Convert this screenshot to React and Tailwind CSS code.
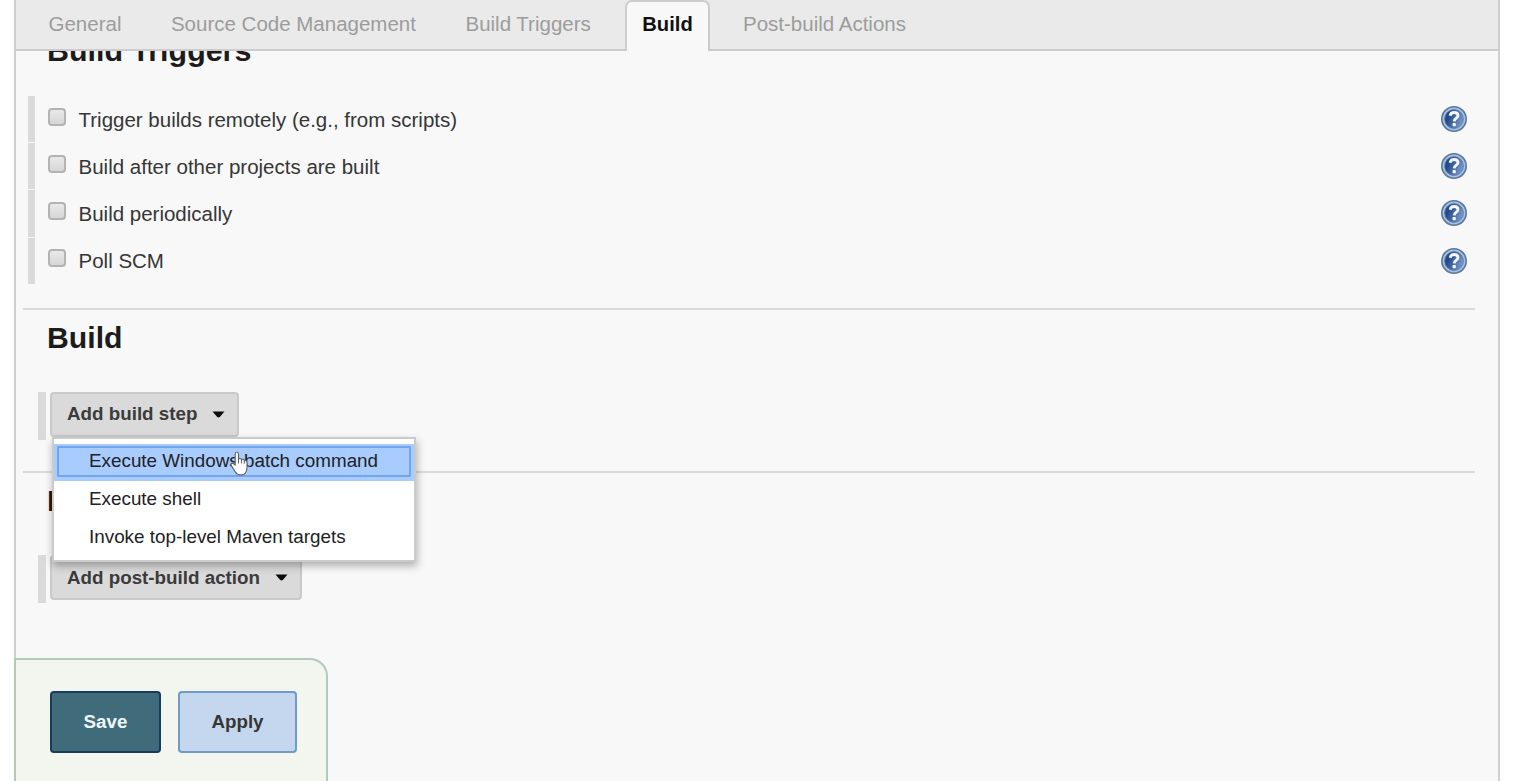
const triggers = [
  'Trigger builds remotely (e.g., from scripts)',
  'Build after other projects are built',
  'Build periodically',
  'Poll SCM',
];

function HelpIcon() {
  return (
    <svg width="28" height="28" viewBox="0 0 28 28" aria-hidden="true">
      <defs>
        <linearGradient id="help" x1="0" y1="0.3" x2="1" y2="0.7">
          <stop offset="0.2" stopColor="#244a8a" />
          <stop offset="1" stopColor="#7f9fd0" />
        </linearGradient>
      </defs>
      <circle cx="14" cy="14" r="12.2" fill="#a9c0e0" stroke="#57799c" strokeWidth="1.6" />
      <circle cx="14" cy="14" r="9.4" fill="url(#help)" stroke="#5578ae" strokeWidth="0.8" />
      <path
        d="M10.1 10.8 C10.5 8.3 12.2 7.5 14.1 7.5 C16.6 7.5 18 8.9 18 10.7 C18 13.2 14.4 13.2 14.2 16.4"
        fill="none"
        stroke="#f4f7fc"
        strokeWidth="2.8"
      />
      <rect x="12.6" y="18" width="3.2" height="3.2" rx="0.8" fill="#f4f7fc" />
    </svg>
  );
}

function Caret() {
  return (
    <svg width="13" height="7" viewBox="0 0 13 7" aria-hidden="true">
      <path d="M0.5 0.4 H12.5 L8 5.8 Q6.5 7 5 5.8 Z" fill="#0c0c0c" />
    </svg>
  );
}

function HandCursor() {
  return (
    <svg
      className="absolute left-[176px] top-[12px]"
      width="19"
      height="26"
      viewBox="0 0 19 26"
      aria-hidden="true"
    >
      <path
        d="M5.2 14.2 V3 Q5.2 1 6.9 1 Q8.5 1 8.5 3 V8 Q9.3 7.2 10.3 7.5 Q11.3 7.7 11.4 8.7 Q12.3 8 13.3 8.4 Q14.3 8.6 14.3 9.6 Q16.8 9.2 17 11.4 V16 Q17 21 14.3 23 Q10.8 24.8 7.2 23 Q4.6 20.7 3.2 17.6 L1.2 14.3 Q0.5 12.5 2 12.1 Q3.4 12 5.2 14.2 Z"
        fill="#fff"
        stroke="#59606e"
        strokeWidth="1.1"
        strokeLinejoin="round"
      />
      <path d="M8.5 8 V12.4 M11.4 9 V12.4 M14.3 9.9 V12.8" stroke="#59606e" strokeWidth="1" />
    </svg>
  );
}

function Tab({ children }) {
  return <div className="shrink-0 whitespace-nowrap">{children}</div>;
}

function StepButton({ children, width }) {
  return (
    <div className="ml-[22px] flex h-12 items-start gap-1">
      <div className="h-12 w-2 bg-[#dadada]" />
      <button
        className={`flex h-[45px] items-center gap-[15px] rounded-[4px] border-2 border-[#c9c9c9] bg-[#dadada] pl-[15px] text-[18.8px] font-bold text-[#3b3b3b] ${width}`}
      >
        {children}
        <Caret />
      </button>
    </div>
  );
}

export default function App() {
  return (
    <div className="h-[781px] w-[1515px] overflow-hidden bg-white pl-[14px] font-['Liberation_Sans',Arial,sans-serif]">
      <div className="flex h-full w-[1486px] flex-col border-x-2 border-[#cfcfcf] bg-[#f8f8f8]">
        <nav className="flex h-[51px] shrink-0 border-b-2 border-[#cccccc] bg-[#eaeaea] pl-[32.5px] text-[20.5px] leading-[47px] text-[#9c9c9c]">
          <Tab>General</Tab>
          <div className="ml-[49.5px]"><Tab>Source Code Management</Tab></div>
          <div className="ml-[49.5px]"><Tab>Build Triggers</Tab></div>
          <div className="ml-auto flex w-[873px]">
            <div className="h-[51px] w-[85px] shrink-0 rounded-t-[7px] border-2 border-b-0 border-[#cccccc] bg-[#f8f8f8] text-center text-[20.2px] font-bold leading-[45px] text-[#111]">
              Build
            </div>
            <div className="ml-[33px]"><Tab>Post-build Actions</Tab></div>
          </div>
        </nav>

        <main className="flex min-h-0 flex-1 flex-col overflow-hidden text-[#222]">
          <h2 className="-mt-[18px] ml-[31px] h-[36px] shrink-0 text-[30.4px] font-bold leading-[34px] text-[#1c1c1c]">
            Build Triggers
          </h2>
          <div className="mt-[27px] flex flex-col gap-px">
            {triggers.map((label) => (
              <div key={label} className="flex h-[46.2px] items-center pl-[12px] pr-[30px]">
                <div className="h-full w-[7px] bg-[#dadada]" />
                <div className="mb-[5px] ml-[13px] h-[18px] w-[18px] rounded-[4px] border-2 border-[#b3b3b3] bg-linear-to-b from-[#e9e9e9] to-[#d6d6d6]" />
                <span className="ml-[12.5px] mt-[2px] text-[20.5px] text-[#363636]">{label}</span>
                <span className="ml-auto"><HelpIcon /></span>
              </div>
            ))}
          </div>
          <div className="ml-[7px] mr-[23px] mt-[24px] h-[2px] shrink-0 bg-[#dadada]" />
          <h2 className="ml-[31px] mt-[11px] h-[36px] shrink-0 text-[30.2px] font-bold leading-[34px] text-[#1c1c1c]">
            Build
          </h2>
          <div className="relative mt-[35px]">
            <StepButton width="w-[189px]">Add build step</StepButton>
            <div className="absolute left-[36px] top-[45px] h-[125px] w-[364px] border-2 border-[#cbcbcb] bg-white pt-[5px] text-[18.85px] text-[#222] shadow-[1px_4px_8px_rgba(0,0,0,0.3)]">
              <div className="h-[37px] bg-[#a9ccff] px-[3px] py-[2px]">
                <div className="h-[31px] rounded-[1px] border-2 border-[#71a6ee] pl-[30px] leading-[26px]">
                  Execute Windows batch command
                </div>
              </div>
              <div className="h-[37px] pl-[35px] leading-[36px]">Execute shell</div>
              <div className="h-[37px] pl-[35px] leading-[38px]">Invoke top-level Maven targets</div>
              <HandCursor />
            </div>
          </div>
          <div className="ml-[7px] mr-[23px] mt-[31px] h-[2px] shrink-0 bg-[#dadada]" />
          <h2 className="ml-[31px] mt-[11px] h-[36px] shrink-0 text-[30.2px] font-bold leading-[34px] text-[#1c1c1c]">
            Post-build Actions
          </h2>
          <div className="mt-[35.4px]">
            <StepButton width="w-[252px]">Add post-build action</StepButton>
          </div>
        </main>

        <footer className="-ml-[2px] flex h-[123px] w-[314px] shrink-0 items-start gap-[17px] rounded-tr-[18px] border-2 border-b-0 border-[#b1cbbb] bg-[#f2f6ee] pl-[34px] pt-[31px] text-[18.75px] font-bold">
          <button className="h-[62px] w-[111px] rounded-[4px] border-2 border-[#173d58] bg-[#3f6b7b] text-[#eff7fa]">
            Save
          </button>
          <button className="h-[62px] w-[119px] rounded-[4px] border-2 border-[#6f9cc6] bg-[#c5d7ee] text-[#363636]">
            Apply
          </button>
        </footer>
      </div>
    </div>
  );
}
